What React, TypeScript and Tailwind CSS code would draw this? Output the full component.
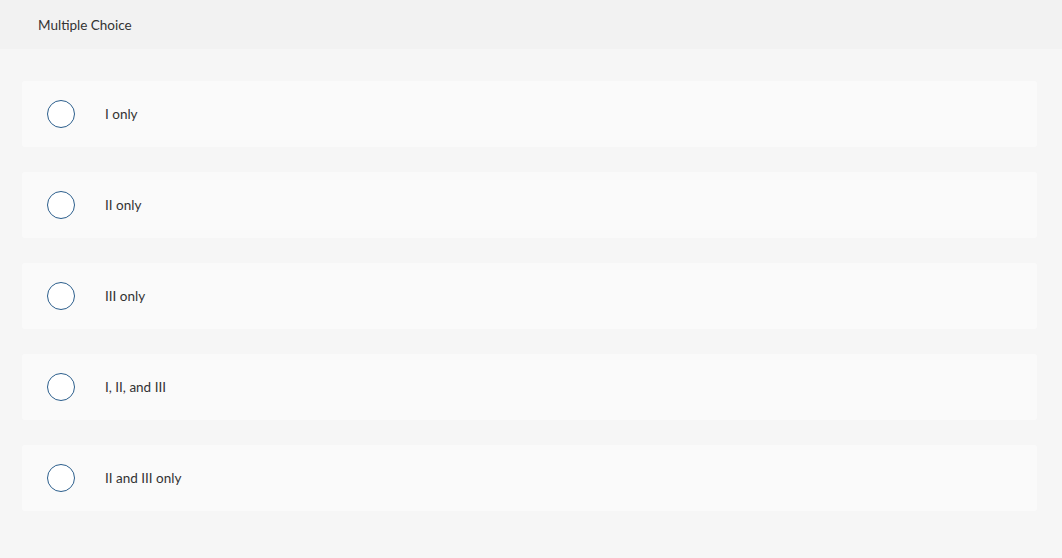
const options = ["I only", "II only", "III only", "I, II, and III", "II and III only"]

function Option({ label }: { label: string }) {
  return (
    <div className="flex h-[66px] items-center rounded-[3px] bg-[#fafafa] pl-[25px]">
      <span className="h-[28px] w-[28px] shrink-0 rounded-full border border-[#2b5e8c] bg-white" />
      <span className="ml-[30px] pt-[1px] text-[13.5px] text-[#333333]">{label}</span>
    </div>
  )
}

export default function App() {
  return (
    <div className="min-h-[558px] bg-[#f6f6f6] font-['Lato','Liberation_Sans',sans-serif]">
      <div className="flex h-[49px] items-center bg-[#f2f2f2] pl-[38px] pt-[1px] text-[13.5px] text-[#333333]">
        Multiple Choice
      </div>
      <div className="flex flex-col gap-[25px] pb-12 pl-[22px] pr-[25px] pt-[32px]">
        {options.map((o) => (
          <Option key={o} label={o} />
        ))}
      </div>
    </div>
  )
}
